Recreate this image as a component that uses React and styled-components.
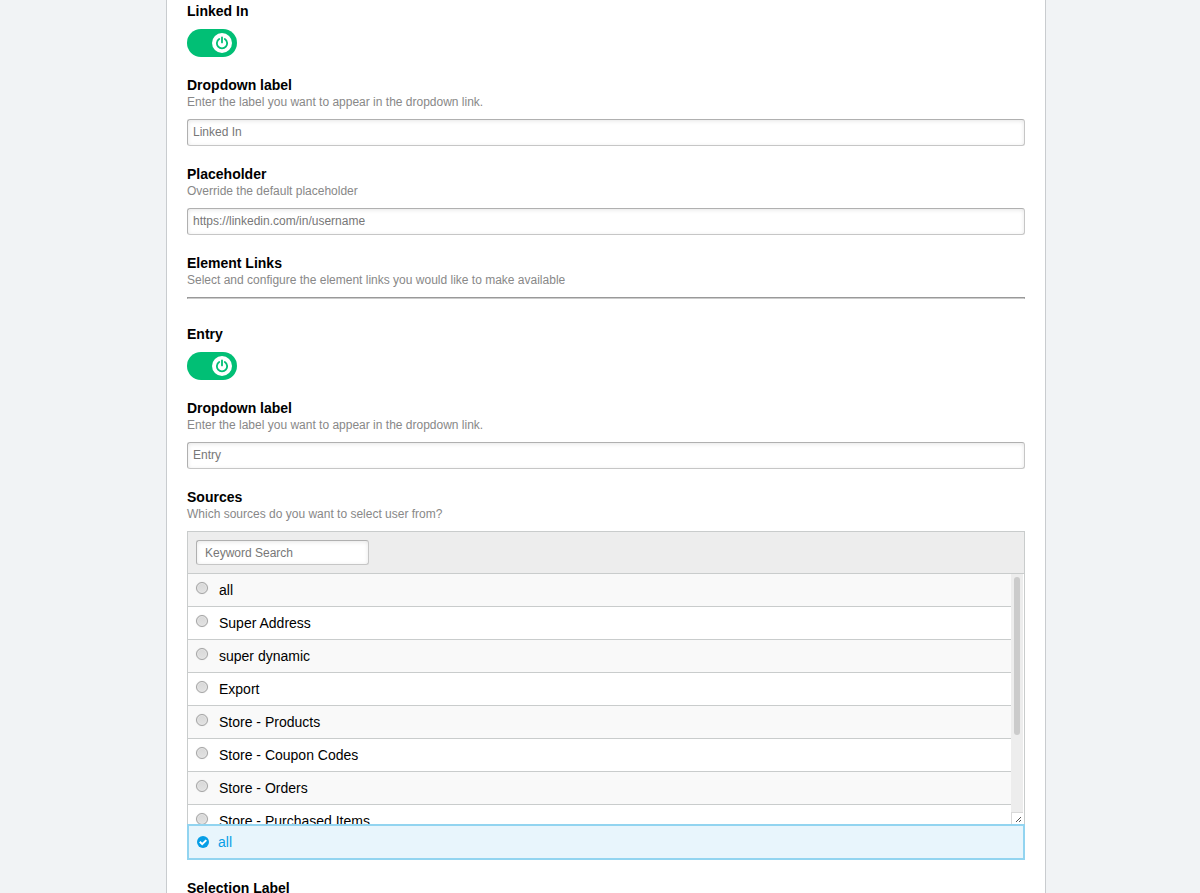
import React, { useState } from "react";
import styled, { createGlobalStyle } from "styled-components";

const GlobalStyle = createGlobalStyle`
	* {
		box-sizing: border-box;
	}

	body {
		margin: 0;
		background: #f1f3f5;
		color: #000;
		font: 14px/17px "Liberation Sans", Arial, sans-serif;
	}
`;

const Page = styled.main`
	height: 100vh;
	padding: 0 154px 0 166px;
	overflow-y: auto;
	scrollbar-width: none;
`;

const Panel = styled.form`
	min-height: 100%;
	padding: 3px 20px 20px;
	background: #fff;
	border: solid #c9cccf;
	border-width: 0 1px;
`;

const Field = styled.div`
	margin-bottom: 20px;
`;

const Label = styled.label`
	display: block;
	font-weight: bold;
`;

const Description = styled.p`
	margin: 0 0 8px;
	color: #888;
	font-size: 12px;
`;

const Divider = styled.hr`
	height: 2px;
	margin: 0 0 27px;
	border: 1px solid #999;
	border-bottom-color: #ccc;
`;

const TextInput = styled.input`
	display: block;
	width: 100%;
	height: 27px;
	padding: 0 5px 2px;
	border: 1px solid #c6c6c6;
	border-top-color: #b0b0b0;
	border-left-color: #b0b0b0;
	border-radius: 3px;
	box-shadow: inset 0 1px 4px rgba(0, 0, 0, 0.1);
	background: #fff;
	font: inherit;
	font-size: 12px;

	&::placeholder {
		color: #777;
	}
`;

const SearchInput = styled(TextInput)`
	width: 173px;
	height: 25px;
	padding: 0 8px;
`;

const ToggleButton = styled.button`
	display: flex;
	align-items: center;
	justify-content: ${(props) => (props.$on ? "flex-end" : "flex-start")};
	width: 50px;
	height: 28px;
	margin-top: 9px;
	padding: 0 5px;
	border: 0;
	border-radius: 14px;
	background: ${(props) => (props.$on ? "#01bf75" : "#bbb")};
	color: ${(props) => (props.$on ? "#01bf75" : "#bbb")};
	cursor: pointer;
`;

const Knob = styled.span`
	display: flex;
	align-items: center;
	justify-content: center;
	width: 20px;
	height: 20px;
	border-radius: 50%;
	background: #fff;
`;

const SourceHeader = styled.div`
	height: 43px;
	padding: 8px;
	background: #ededed;
	border: 1px solid #c9cccc;
`;

const SourceBody = styled.div`
	display: flex;
	height: 250px;
	padding-right: 1px;
	border: solid #c9cccc;
	border-width: 0 1px;
`;

const SourceList = styled.div`
	flex: 1;
	overflow-y: auto;
	scrollbar-width: none;
`;

const SourceRow = styled.label`
	display: flex;
	align-items: center;
	gap: 11px;
	height: 33px;
	padding: 0 8px;
	border-bottom: 1px solid #c9cccc;

	&:nth-child(odd) {
		background: #f9f9f9;
	}
`;

const Radio = styled.input`
	appearance: none;
	width: 12px;
	height: 12px;
	margin: 0 0 4px;
	border: 1px solid #a3a3a3;
	border-radius: 50%;
	background: linear-gradient(#d8d8d8, #e2e2e2);
	box-shadow: inset 0 0 0 1px #e6e6e6, 0 0 1px #ccc;
`;

const ScrollTrack = styled.div`
	display: flex;
	flex-direction: column;
	justify-content: space-between;
	width: 12px;
	background: #ededed;
`;

const ScrollThumb = styled.div`
	width: 6px;
	height: 158px;
	margin: 3px 3px 0;
	border-radius: 3px;
	background: #cbcbcb;
`;

const ResizeCorner = styled.div`
	display: flex;
	align-items: flex-end;
	justify-content: flex-end;
	height: 12px;
	padding: 0 1px 1px 0;
	border: solid #d9d9d9;
	border-width: 1px 0 0 1px;
	background: #fff;
`;

const Selected = styled.div`
	display: flex;
	align-items: center;
	gap: 9px;
	height: 36px;
	padding: 0 8px;
	border: 2px solid #92d4f0;
	background: #e8f5fc;
	color: #069ee6;
`;

const sources = [
	"all",
	"Super Address",
	"super dynamic",
	"Export",
	"Store - Products",
	"Store - Coupon Codes",
	"Store - Orders",
	"Store - Purchased Items",
];

function PowerIcon() {
	return (
		<svg
			width="12"
			height="14"
			viewBox="0 0 12 14"
			fill="none"
			stroke="currentColor"
			strokeWidth="1.8"
			strokeLinecap="round"
		>
			<path d="M3.2 3A5.1 5.1 0 1 0 8.8 3" />
			<path d="M6 1.4V6.4" />
		</svg>
	);
}

function CheckIcon() {
	return (
		<svg width="12" height="12" viewBox="0 0 12 12" fill="none">
			<circle cx="6" cy="6" r="6" fill="currentColor" />
			<path d="M2.8 5.8L5.2 8.2L9.3 4.1" stroke="#fff" strokeWidth="2" />
		</svg>
	);
}

function ResizeIcon() {
	return (
		<svg width="6" height="6" viewBox="0 0 6 6" fill="#555">
			<path d="M0 4h1v1H0zM1 3h1v1H1zM2 2h1v1H2zM3 1h1v1H3zM4 0h1v1H4zM3 4h1v1H3zM4 3h1v1H4z" />
		</svg>
	);
}

function Toggle({ id, label }) {
	const [on, setOn] = useState(true);
	return (
		<Field>
			<Label htmlFor={id}>{label}</Label>
			<ToggleButton
				id={id}
				type="button"
				role="switch"
				aria-checked={on}
				$on={on}
				onClick={() => setOn(!on)}
			>
				<Knob>
					<PowerIcon />
				</Knob>
			</ToggleButton>
		</Field>
	);
}

function TextField({ id, label, description, placeholder }) {
	return (
		<Field>
			<Label htmlFor={id}>{label}</Label>
			<Description>{description}</Description>
			<TextInput id={id} type="text" placeholder={placeholder} />
		</Field>
	);
}

function SourcePicker() {
	const [selected, setSelected] = useState("all");
	const [keyword, setKeyword] = useState("");
	const visible = sources.filter((name) =>
		name.toLowerCase().includes(keyword.toLowerCase())
	);
	return (
		<Field>
			<Label as="div">Sources</Label>
			<Description>Which sources do you want to select user from?</Description>
			<SourceHeader>
				<SearchInput
					type="text"
					aria-label="Keyword Search"
					placeholder="Keyword Search"
					value={keyword}
					onChange={(e) => setKeyword(e.target.value)}
				/>
			</SourceHeader>
			<SourceBody>
				<SourceList>
					{visible.map((name) => (
						<SourceRow key={name}>
							<Radio
								type="radio"
								name="source"
								value={name}
								onClick={() => setSelected(name)}
							/>
							{name}
						</SourceRow>
					))}
				</SourceList>
				<ScrollTrack>
					<ScrollThumb />
					<ResizeCorner>
						<ResizeIcon />
					</ResizeCorner>
				</ScrollTrack>
			</SourceBody>
			<Selected>
				<CheckIcon />
				{selected}
			</Selected>
		</Field>
	);
}

function App() {
	return (
		<Page>
			<GlobalStyle />
			<Panel>
				<Toggle id="linkedin" label="Linked In" />
				<TextField
					id="linkedin-label"
					label="Dropdown label"
					description="Enter the label you want to appear in the dropdown link."
					placeholder="Linked In"
				/>
				<TextField
					id="linkedin-placeholder"
					label="Placeholder"
					description="Override the default placeholder"
					placeholder="https://linkedin.com/in/username"
				/>
				<Label as="div">Element Links</Label>
				<Description>
					Select and configure the element links you would like to make available
				</Description>
				<Divider />
				<Toggle id="entry" label="Entry" />
				<TextField
					id="entry-label"
					label="Dropdown label"
					description="Enter the label you want to appear in the dropdown link."
					placeholder="Entry"
				/>
				<SourcePicker />
				<Label as="div">Selection Label</Label>
			</Panel>
		</Page>
	);
}

export default App;
